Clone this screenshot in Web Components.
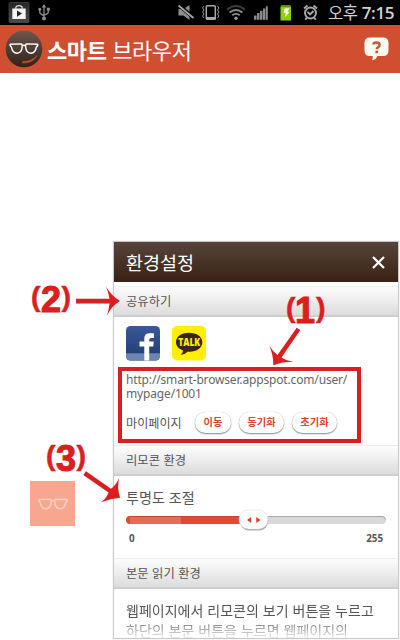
<!DOCTYPE html>
<html lang="ko">
<head>
<meta charset="utf-8">
<title>스마트 브라우저</title>
<style>
html,body{margin:0;padding:0}
body{width:400px;height:640px;overflow:hidden;background:#fff;font-family:"Open Sans","Noto Sans CJK KR",sans-serif}
</style>
</head>
<body>
<smart-app></smart-app>
<script>
function define(name, html) {
  const t = document.createElement('template');
  t.innerHTML = html;
  customElements.define(name, class extends HTMLElement {
    constructor() {
      super();
      this.attachShadow({mode: 'open'}).appendChild(t.content.cloneNode(true));
    }
  });
}

const glasses = `<g fill="none" stroke="currentColor" stroke-width="1.5" stroke-linejoin="round"><path d="M1 1.6 12 1.2q1.6.2 1.3 2.4Q12.800 10.600 8 10.700 3.200 10.700 2.300 4.500L1 3.200ZM29 1.600 18 1.200q-1.600.200-1.300 2.400Q17.200 10.600 22 10.700 26.800 10.700 27.700 4.500L29 3.200Z"/><path d="M13 3.200q2-1.200 4 0"/></g>`;

define('status-bar', `
<style>
:host{display:flex;height:25px;background:#000;align-items:center;color:#d6d6d6}
svg{display:block;flex:none}
.icons{margin-left:auto}
.time{width:67px;margin-left:9px;margin-right:5px;font:600 17px/25px "Open Sans","Noto Sans CJK KR",sans-serif;white-space:nowrap;letter-spacing:-.35px;color:#d2d2d2}
.time span{font:400 16.500px/24px "Noto Sans CJK KR",sans-serif}
</style>
<svg width="55" height="25" viewBox="0 0 55 25">
<defs><linearGradient id="a" x2="0" y2="1"><stop stop-color="#242424"/><stop offset="1" stop-color="#4c4c4c"/></linearGradient></defs>
<rect x="9" y="2.500" width="20" height="20" rx="1" fill="url(#a)" stroke="#555" stroke-width=".6"/>
<path d="M12.300 8.500h13.400v10.500H12.300z" fill="#f4f4f4"/><path d="M15.800 9.500V7.800q0-2.200 3.200-2.200t3.200 2.200v1.700" fill="none" stroke="#ddd" stroke-width="1.200"/><path d="M17 10.500v6.300l5-3.200z" fill="#222"/>
<g stroke="#8c8c8c" fill="none" stroke-width="1.300"><path d="M44 6v13M39.800 9.500v3.300q.4 1.200 4.200 3M48.300 9v3.500q-.3 1.200-4.300 2.500"/></g><g fill="#8c8c8c"><path d="m44 4 2.300 3.500h-4.600z"/><circle cx="39.800" cy="9.200" r="1.500"/><path d="M46.800 7.700h3v3h-3z"/><circle cx="44" cy="18.500" r="2"/></g>
</svg>
<svg class="icons" width="145" height="25" viewBox="174 0 145 25">
<path d="M178.500 9h5l6-4v15l-6-4.500h-5z" fill="#8f8f8f"/><path d="m178.500 5 15.500 13" stroke="#000" stroke-width="3.600"/><path d="m178.500 5.500 15 12.500" stroke="#a8a8a8" stroke-width="1.700"/>
<rect x="206.300" y="5.800" width="9" height="13.400" rx="1" fill="none" stroke="#a8a8a8" stroke-width="1.500"/><path d="M206 17h10v2.500h-10z" fill="#a8a8a8"/>
<path d="m204 6-1.500 2 1.500 2-1.500 2 1.500 2-1.500 2 1.500 2M217.500 6l1.500 2-1.500 2 1.500 2-1.500 2 1.500 2-1.500 2" fill="none" stroke="#999" stroke-width="1"/>
<g fill="none" stroke="#8e8e8e" stroke-width="1.800"><path d="M227 9.700q9-7.400 18 0" stroke="#3d3d3d"/><path d="M229.500 12.500q6.500-5 13 0M232.300 15.300q3.700-2.700 7.400 0"/></g><circle cx="236" cy="18.200" r="1.700" fill="#999"/>
<g fill="#8b8b8b"><path d="M254 15.500h2.500v4.300H254zM257 13h2.500v6.800H257zM260 10.800h2.500v9H260zM263 8.500h2.300v11.300H263zM265.800 6.200h2v13.600h-2z"/></g>
<path d="M280.500 6.500h3V5h4.500v1.500h3v14h-10.500z" fill="#8ed000"/><path d="M281 5h9.500v2H281z" fill="#629200"/><path d="m284.500 8.500 5-.3-2.200 3.600 2 .2-4.600 5.500 1.200-4.300-2.400-.2z" fill="#fff"/>
<circle cx="310.500" cy="13" r="5.500" fill="none" stroke="#aaa" stroke-width="1.900"/><path d="m304 8.500 3.500-3M313.500 5.500l3.500 3M306.500 18l-1.200 1.800M314.500 18l1.200 1.800M307.500 11.800l2.600 2.700 3.400-3.500" fill="none" stroke="#aaa" stroke-width="1.900"/>
</svg>
<div class="time"><span>오후</span> 7:15</div>`);

define('app-bar', `
<style>
:host{display:flex;box-sizing:border-box;height:48px;padding:0 11px 0 5px;align-items:center;background:#d04f30;color:#fff}
svg{display:block;flex:none}
h1{margin:0 auto 0 4px;font:400 22px/45px "Noto Sans CJK KR",sans-serif;letter-spacing:-.42px;white-space:nowrap}
b{font-weight:700}
</style>
<svg width="38" height="38" viewBox="0 0 38 38"><defs><linearGradient id="b" x2="0" y2="1"><stop stop-color="#6d574d"/><stop offset="1" stop-color="#32221b"/></linearGradient></defs>
<circle cx="19" cy="19" r="18.300" fill="url(#b)"/><g transform="translate(4.200 12.700) scale(.98)" color="#fff">${glasses}</g><path d="M17.500 31.600q9 .4 14.500-6-4.500 8-14.500 7.200z" fill="#d04f30" stroke="#d04f30" stroke-width=".6"/></svg>
<h1><b>스마트</b> 브라우저</h1>
<svg width="25" height="26" viewBox="0 0 25 26"><path d="M6 1.500h13q5.500 0 5.500 5.500v7.500q0 5.500-5.500 5.500h-5.500q-1.500 3.500-5.500 4.500 1.300-2 .6-4.500H6Q.5 20 .5 14.500V7Q.5 1.500 6 1.500z" fill="#fffcf2"/><path d="M9.300 8.500q.2-2 3.200-2t3.200 2.300q0 1.500-1.600 2.400-1.400.8-1.400 2" fill="none" stroke="#d04f30" stroke-width="2.400"/><path d="M11.400 14.700h2.600v2.500h-2.600z" fill="#d04f30"/></svg>`);

define('section-bar', `
<style>
:host{display:block;box-sizing:border-box;height:31px;padding-left:12px;border-top:1px solid #ededed;border-bottom:2px solid #cecece;background:linear-gradient(#fdfdfd,#dcdcdc);color:#555;font:400 12.300px/28px "Noto Sans CJK KR",sans-serif}
</style><slot></slot>`);

define('pill-button', `
<style>
:host{display:block;box-sizing:border-box;height:21px;border-radius:11px;background:#fff;box-shadow:0 1px 1.500px 0 #888,0 0 1px #bbb;color:#dc4a30;text-align:center;font:700 10.300px/20px "Noto Sans CJK KR",sans-serif}
</style><slot></slot>`);

define('share-icons', `
<style>:host{display:flex;gap:12px;padding:9px 0 0 12px}svg{display:block}</style>
<svg width="34" height="35" viewBox="0 0 34 35"><defs><linearGradient id="c" x2="0" y2="1"><stop stop-color="#3b5998"/><stop offset="1" stop-color="#1f3a70"/></linearGradient><clipPath id="k"><rect width="34" height="34.500" rx="4.500"/></clipPath></defs><g clip-path="url(#k)"><path d="M0 0h34v35H0z" fill="url(#c)"/><path d="M0 27.300h34V35H0z" fill="#6d83b0"/><path d="M18.300 35V20.500h-4.800v-5h4.800v-3q0-5.300 5.600-5.300h4v4.700h-2.700q-2 0-2 1.800v1.800h4.600l-.6 5h-4V35z" fill="#fff"/></g></svg>
<svg width="34" height="35" viewBox="0 0 34 35"><rect width="34" height="34.500" rx="5" fill="#fff000"/><path d="M17 6.800c8 0 13.300 4 13.300 9.500S25 25.700 17.500 25.700q-1 0-2 0-3 3.200-7 3 2.600-1.600 2.500-4.300C6.800 23 4 20 4 16.300 4 10.800 9 6.800 17 6.800z" fill="#3b2320"/><text x="17.200" y="20" text-anchor="middle" textLength="22" lengthAdjust="spacingAndGlyphs" font-family="Open Sans,sans-serif" font-weight="800" font-size="9.800" fill="#fff000">TALK</text></svg>`);

define('my-page', `
<style>
:host{display:block;padding:12px 12px 0;color:#666}
.url{display:flex;flex-direction:column;font:400 12px/14px "Noto Sans",sans-serif;color:#666;letter-spacing:-.16px;white-space:nowrap}
.url span{display:block;height:14px}
.row{display:flex;align-items:center;margin-top:10px;height:23px}
.label{width:69px;font:400 12.100px/22px "Noto Sans CJK KR",sans-serif;color:#555}
.a{width:36px;margin-right:8px}.b{width:45px;margin-right:8px}.c{width:45px}
</style>
<div class="url"><span>http://smart-browser.appspot.com/user/</span><span>mypage/1001</span></div>
<div class="row"><span class="label">마이페이지</span><pill-button class="a">이동</pill-button><pill-button class="b">동기화</pill-button><pill-button class="c">초기화</pill-button></div>`);

define('opacity-slider', `
<style>
:host{display:block;padding:9px 12px 0;height:73px}
.t{font:400 14.100px/24px "Noto Sans CJK KR",sans-serif;color:#555}
svg{display:block;margin-top:-1px}
.n{display:flex;justify-content:space-between;padding:0 3px;font:700 9.800px/12px "Open Sans",sans-serif;color:#555;margin-top:1px}
</style>
<div class="t">투명도 조절</div>
<svg width="260" height="24" viewBox="0 0 260 24">
<rect y="8" width="260" height="8" rx="4" fill="#d9d9d9"/><path d="M4 8.500h252q3 0 3.500 3" fill="none" stroke="#aaa"/>
<path d="M4 8h121v8H4Q0 16 0 12t4-4z" fill="#e14a2e"/><path d="M4 8h51v8H4z" fill="#e66d55"/><path d="M4 8.500h121" stroke="#b94932"/>
<rect x="113.500" y="3" width="29" height="19.500" rx="9.700" fill="#aaa"/><rect x="113" y="2" width="29" height="19" rx="9.500" fill="#fff" stroke="#ddd" stroke-width=".6"/>
<path d="m121 12 4.200-3v6zM134.500 12l-4.200-3v6z" fill="#dc3d25"/></svg>
<div class="n"><span>0</span><span>255</span></div>`);

define('settings-panel', `
<style>
:host{display:block;box-sizing:border-box;width:286px;height:398px;border:1px solid #c9c9c9;background:#fff;overflow:hidden;box-shadow:0 0 1px #ccc}
header{display:flex;justify-content:space-between;align-items:center;height:40px;padding:0 13px 0 12px;background:linear-gradient(#56443b,#3a2113);color:#fff;font:400 18.500px/40px "Noto Sans CJK KR",sans-serif;margin-bottom:4px}
svg{display:block}
my-page{height:72px}
p{margin:0;padding:11px 12px 0;color:#555;font:400 14.020px/20px "Noto Sans CJK KR",sans-serif;white-space:nowrap;height:40px;-webkit-mask-image:linear-gradient(#000 28px,transparent 52px)}
</style>
<header><span>환경설정</span><svg width="13" height="13" viewBox="0 0 13 13"><path d="m1 1 11 11M12 1 1 12" stroke="#fff" stroke-width="2.200"/></svg></header>
<section-bar>공유하기</section-bar>
<share-icons></share-icons>
<my-page></my-page>
<section-bar>리모콘 환경</section-bar>
<opacity-slider></opacity-slider>
<section-bar>본문 읽기 환경</section-bar>
<p>웹페이지에서 리모콘의 보기 버튼을 누르고<br>하단의 본문 버튼을 누르면 웹페이지의</p>`);

define('remote-button', `
<style>:host{display:flex;width:45px;height:45px;background:#f9a68f;align-items:center;justify-content:center;color:#fbd0c4}svg{display:block}</style>
<svg width="30" height="12" viewBox="0 0 30 12">${glasses}</svg>`);

define('guide-marks', `
<style>:host{position:absolute;left:0;top:0;width:400px;height:640px}svg{display:block}text{font-family:"Liberation Sans",sans-serif;font-weight:700;fill:#dc1e20;stroke:#dc1e20;stroke-width:.5}.d{stroke-width:1.100}</style>
<svg width="400" height="640" viewBox="0 0 400 640" fill="#dc1e20">
<rect x="120" y="369" width="239" height="72" fill="none" stroke="#dc1e20" stroke-width="4"/>
<text y="317" x="286" font-size="28.500">(</text><text class="d" x="295" y="322.500" font-size="36">1</text><text x="316" y="317" font-size="28.500">)</text>
<text y="306" x="31" font-size="28.500">(</text><text class="d" x="41" y="311.500" font-size="36">2</text><text x="61.500" y="306" font-size="28.500">)</text>
<text y="465" x="46" font-size="28.500">(</text><text class="d" x="56" y="470.500" font-size="36">3</text><text x="76.500" y="465" font-size="28.500">)</text>
<path d="M76 298.700H109.500Q108.500 292 106 286.500 111.500 296 120 301 111.500 306 107 315.500 109 309 109.500 303.400H76z"/>
<path d="M296.700 327.700 300.300 330 281.500 357.500Q287 361.200 293.300 362 282 361.500 273.300 365.300 273.500 355 269.300 345.700 273 351.500 277.500 355z"/>
<path d="M86 471.300 111 488.800Q116.500 484.500 119 478 117 489 120 497.700 111 498.500 101 502.300 106.500 498.500 108.500 492.500L83.300 475z"/>
</svg>`);

define('smart-app', `
<style>
:host{display:block;position:relative;width:400px;height:640px;overflow:hidden;background:#fff}
main{display:grid;grid-template-columns:83px 286px;padding-left:30px;padding-top:168px;align-items:start}
remote-button{margin-top:240px}
</style>
<status-bar></status-bar><app-bar></app-bar>
<main><remote-button></remote-button><settings-panel></settings-panel></main>
<guide-marks></guide-marks>`);
</script>
</body>
</html>
